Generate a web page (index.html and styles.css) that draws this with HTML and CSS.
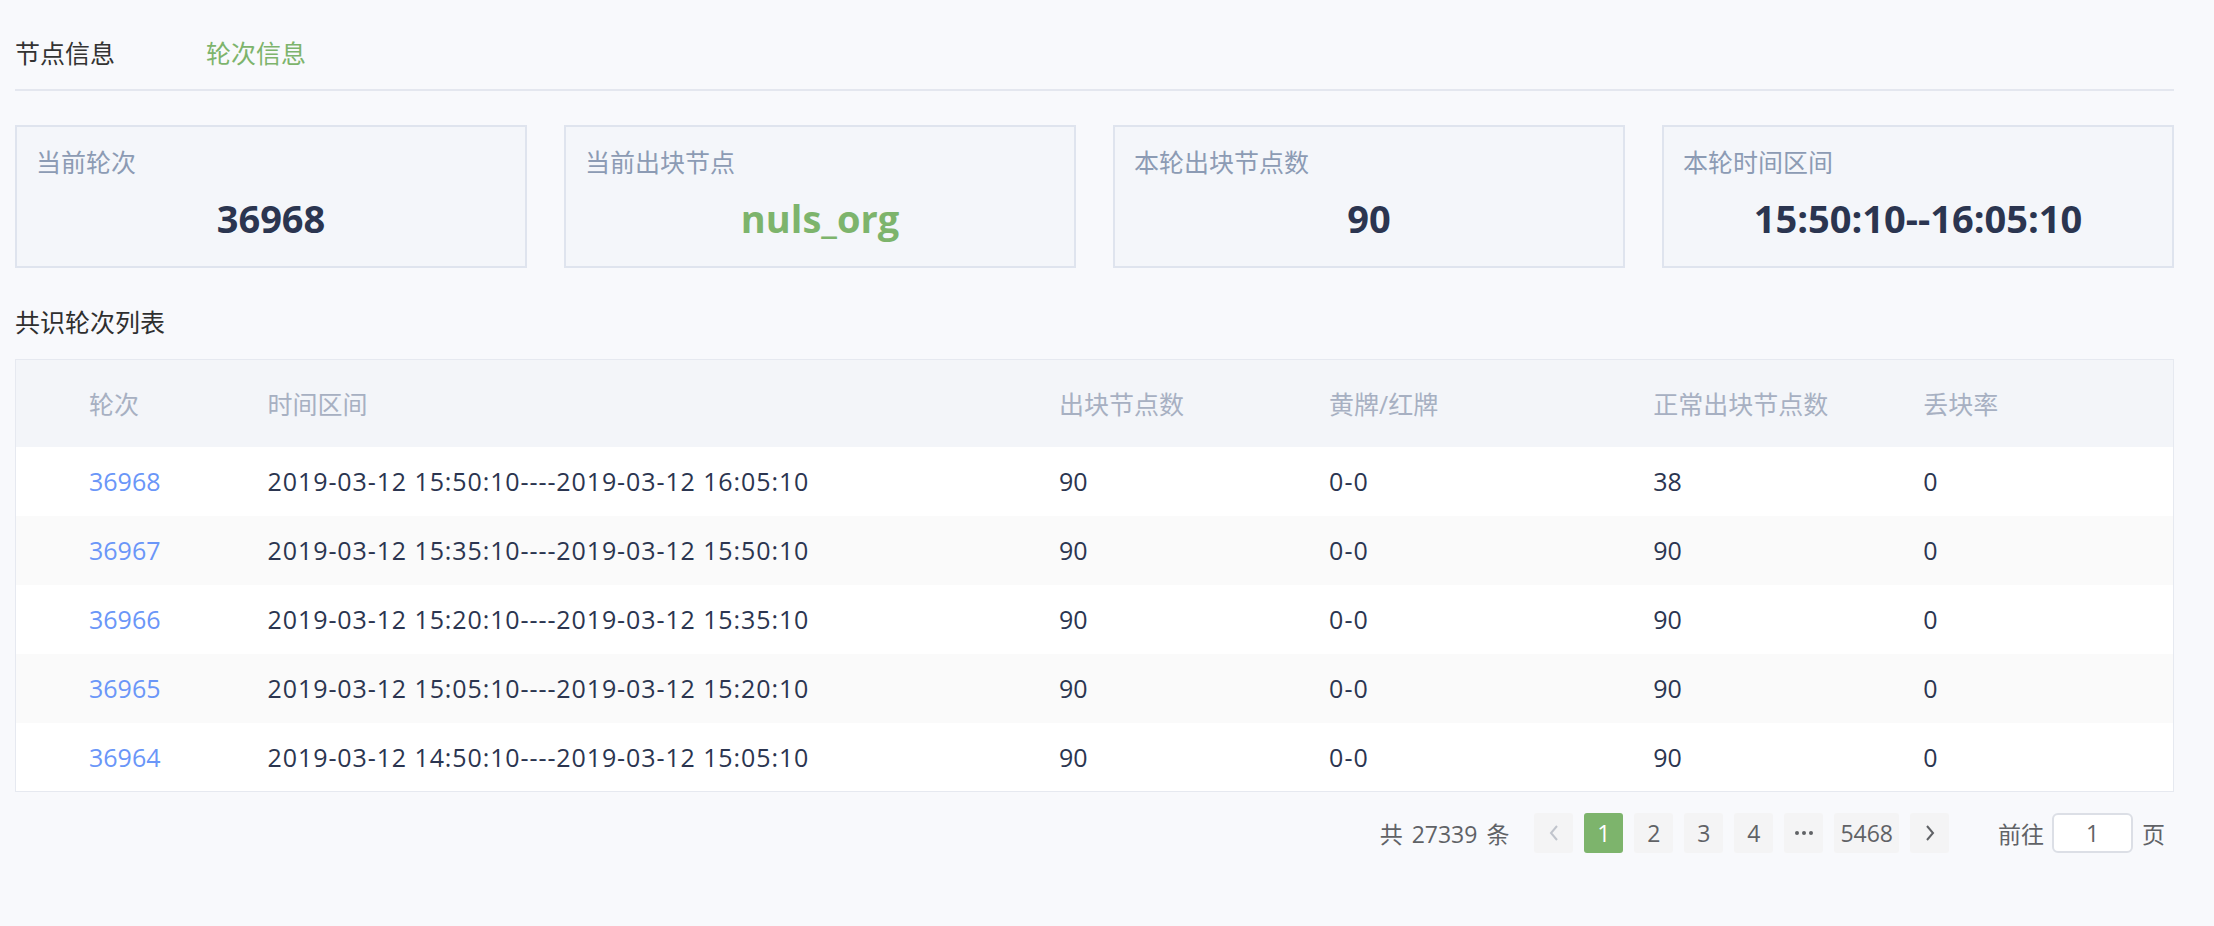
FILE: index.html
```html
<!DOCTYPE html>
<html lang="zh">
<head>
<meta charset="utf-8">
<title>轮次信息</title>
<link rel="stylesheet" href="styles.css">
</head>
<body>
<div class="page">
  <div class="tabs">
    <span class="tab">节点信息</span>
    <span class="tab active">轮次信息</span>
  </div>

  <div class="cards">
    <div class="card"><div class="card-label">当前轮次</div><div class="card-value">36968</div></div>
    <div class="card"><div class="card-label">当前出块节点</div><div class="card-value green">nuls_org</div></div>
    <div class="card"><div class="card-label">本轮出块节点数</div><div class="card-value">90</div></div>
    <div class="card"><div class="card-label">本轮时间区间</div><div class="card-value">15:50:10--16:05:10</div></div>
  </div>

  <div class="section-title">共识轮次列表</div>

  <table class="rounds">
    <colgroup>
      <col class="c1"><col class="c2"><col class="c3"><col class="c4"><col class="c5"><col class="c6">
    </colgroup>
    <thead>
      <tr><th>轮次</th><th>时间区间</th><th>出块节点数</th><th>黄牌/红牌</th><th>正常出块节点数</th><th>丢块率</th></tr>
    </thead>
    <tbody>
      <tr><td><a class="link">36968</a></td><td class="range">2019-03-12 15:50:10----2019-03-12 16:05:10</td><td>90</td><td class="cardnum">0-0</td><td>38</td><td>0</td></tr>
      <tr class="stripe"><td><a class="link">36967</a></td><td class="range">2019-03-12 15:35:10----2019-03-12 15:50:10</td><td>90</td><td class="cardnum">0-0</td><td>90</td><td>0</td></tr>
      <tr><td><a class="link">36966</a></td><td class="range">2019-03-12 15:20:10----2019-03-12 15:35:10</td><td>90</td><td class="cardnum">0-0</td><td>90</td><td>0</td></tr>
      <tr class="stripe"><td><a class="link">36965</a></td><td class="range">2019-03-12 15:05:10----2019-03-12 15:20:10</td><td>90</td><td class="cardnum">0-0</td><td>90</td><td>0</td></tr>
      <tr><td><a class="link">36964</a></td><td class="range">2019-03-12 14:50:10----2019-03-12 15:05:10</td><td>90</td><td class="cardnum">0-0</td><td>90</td><td>0</td></tr>
    </tbody>
  </table>

  <div class="pager">
    <span class="total">共 27339 条</span>
    <div class="pages">
      <span class="pbtn prev"><svg width="14" height="20" viewBox="0 0 14 20"><path d="M10 3 L4 10 L10 17" fill="none" stroke="#c0c4cc" stroke-width="2"/></svg></span>
      <span class="pbtn current">1</span>
      <span class="pbtn">2</span>
      <span class="pbtn">3</span>
      <span class="pbtn">4</span>
      <span class="pbtn more"><svg width="20" height="6" viewBox="0 0 20 6"><circle cx="3" cy="3" r="2" fill="#606266"/><circle cx="10" cy="3" r="2" fill="#606266"/><circle cx="17" cy="3" r="2" fill="#606266"/></svg></span>
      <span class="pbtn wide">5468</span>
      <span class="pbtn next"><svg width="14" height="20" viewBox="0 0 14 20"><path d="M4 3 L10 10 L4 17" fill="none" stroke="#606266" stroke-width="2"/></svg></span>
    </div>
    <span class="jump">前往<span class="jump-input">1</span>页</span>
  </div>
</div>
</body>
</html>
```

FILE: styles.css
```css
* { box-sizing: border-box; }
html, body { margin: 0; padding: 0; }
body {
  background: #f8f9fc;
  font-family: "Open Sans", "Noto Sans CJK SC", sans-serif;
  color: #2b3550;
}
.page {
  width: 2159px;
  margin-left: 15px;
  padding-top: 35px;
}
.tabs {
  display: flex;
  gap: 91px;
  border-bottom: 2px solid #e4e7ef;
  padding-bottom: 18px;
}
.tab {
  font-size: 25px;
  line-height: 36px;
  color: #333333;
}
.tab.active { color: #7db46c; }

.cards {
  display: flex;
  justify-content: space-between;
  margin-top: 34px;
}
.card {
  width: 512px;
  height: 143px;
  background: #f4f6fa;
  border: 2px solid #dfe4ee;
  padding: 18px 19px 0;
}
.card-label {
  font-size: 25px;
  line-height: 34px;
  color: #8c9bb4;
}
.card-value {
  margin-top: 13px;
  text-align: center;
  font-size: 38px;
  line-height: 52px;
  font-weight: 700;
  color: #2b3550;
}
.card-value.green { color: #7db46c; }

.section-title {
  margin-top: 36px;
  font-size: 25px;
  line-height: 36px;
  color: #2f2f2f;
}

.rounds {
  margin-top: 19px;
  width: 100%;
  table-layout: fixed;
  border-collapse: collapse;
  border: 1px solid #e6e9f0;
  font-size: 25px;
}
.c1 { width: 252px; }
.c2 { width: 791px; }
.c3 { width: 270px; }
.c4 { width: 324px; }
.c5 { width: 270px; }
.c6 { width: 250px; }
.rounds th {
  background: #f3f5f9;
  height: 87px;
  text-align: left;
  font-weight: 400;
  color: #a7b0c2;
  padding: 0;
}
.rounds td {
  height: 69px;
  padding: 0;
  background: #ffffff;
  color: #2b3550;
  white-space: nowrap;
}
.rounds td.range { letter-spacing: 0.9px; }
.rounds td.cardnum { letter-spacing: 1px; }
.rounds tr.stripe td { background: #fafafa; }
.rounds th:first-child, .rounds td:first-child { padding-left: 73px; }
.link { color: #6a96f8; }

.pager {
  display: flex;
  justify-content: flex-end;
  align-items: center;
  margin-top: 21px;
  padding-right: 9px;
  font-size: 23px;
  color: #606266;
}
.total { margin-right: 25px; word-spacing: 3px; }
.pages { display: flex; gap: 11px; }
.pbtn {
  min-width: 39px;
  height: 40px;
  padding: 0 6px;
  border-radius: 3px;
  background: #f4f4f5;
  display: flex;
  align-items: center;
  justify-content: center;
  color: #606266;
}
.pbtn.current { background: #7db46c; color: #ffffff; }
.jump {
  display: flex;
  align-items: center;
  margin-left: 49px;
}
.jump-input {
  width: 81px;
  height: 40px;
  margin: 0 9px 0 8px;
  background: #ffffff;
  border: 2px solid #dcdfe6;
  border-radius: 6px;
  display: flex;
  align-items: center;
  justify-content: center;
  color: #606266;
}
```
